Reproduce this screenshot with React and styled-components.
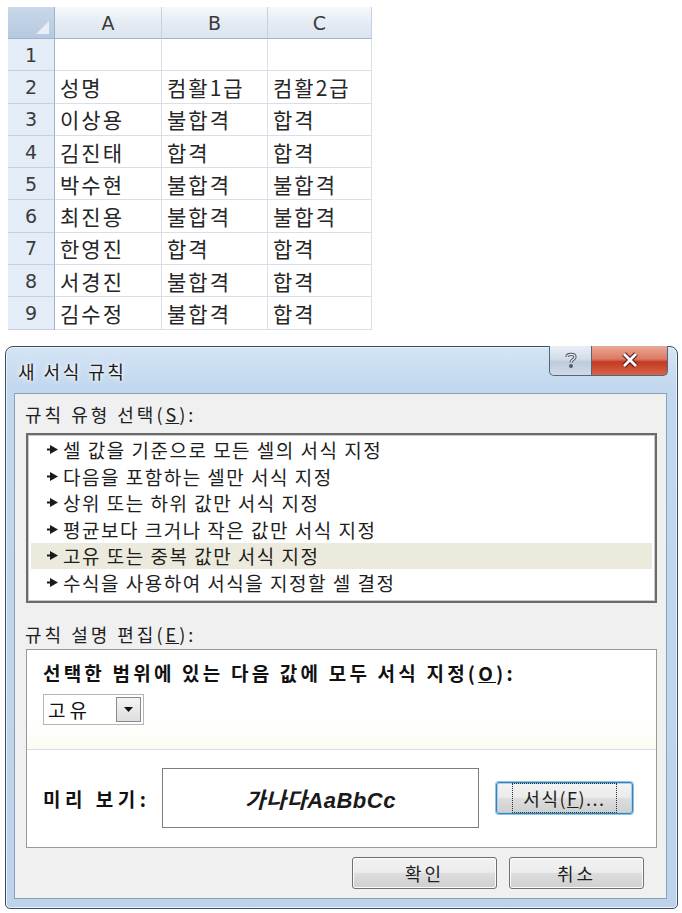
import React from 'react'
import styled, { createGlobalStyle } from 'styled-components'

const GlobalStyle = createGlobalStyle`
  html, body {
    margin: 0;
    background: #ffffff;
  }
  body {
    font-family: "Noto Sans CJK KR", "Liberation Sans", sans-serif;
    color: #222;
  }
`

const rows = [
  ['', '', ''],
  ['성명', '컴활1급', '컴활2급'],
  ['이상용', '불합격', '합격'],
  ['김진태', '합격', '합격'],
  ['박수현', '불합격', '불합격'],
  ['최진용', '불합격', '불합격'],
  ['한영진', '합격', '합격'],
  ['서경진', '불합격', '합격'],
  ['김수정', '불합격', '합격'],
]

const rules = [
  '셀 값을 기준으로 모든 셀의 서식 지정',
  '다음을 포함하는 셀만 서식 지정',
  '상위 또는 하위 값만 서식 지정',
  '평균보다 크거나 작은 값만 서식 지정',
  '고유 또는 중복 값만 서식 지정',
  '수식을 사용하여 서식을 지정할 셀 결정',
]

const Page = styled.div`
  padding: 7px 0 0 0;
`

/* ---------- spreadsheet ---------- */

const Sheet = styled.div`
  margin-left: 8px;
  display: grid;
  grid-template-columns: 47px 107px 106px 104px;
  grid-template-rows: 32px repeat(9, 32.3px);
  width: 364px;
`

const Corner = styled.div`
  position: relative;
  background: linear-gradient(180deg, #c9d8ea 0%, #b6c9e0 100%);
  border-right: 1px solid #9fb3cc;
  border-bottom: 1px solid #9fb3cc;
`

const CornerMark = styled.span`
  position: absolute;
  right: 5px;
  bottom: 4px;
  width: 0;
  height: 0;
  border-left: 13px solid transparent;
  border-bottom: 13px solid #e9eef5;
`

const HeadCell = styled.div`
  display: flex;
  align-items: center;
  justify-content: center;
  background: linear-gradient(180deg, #f6f8fb 0%, #e4ebf4 55%, #dbe4ef 100%);
  border-right: 1px solid #c5d1e0;
  border-bottom: 1px solid #9fb3cc;
  font-family: "DejaVu Sans", "Liberation Sans", sans-serif;
  font-size: 19px;
  color: #3b3b3b;
`

const RowHead = styled.div`
  display: flex;
  align-items: center;
  justify-content: center;
  background: #e4ecf7;
  border-right: 1px solid #9fb3cc;
  border-bottom: 1px solid #c5d1e0;
  font-family: "DejaVu Sans", "Liberation Sans", sans-serif;
  font-size: 19px;
  color: #3b3b3b;
`

const Cell = styled.div`
  display: flex;
  align-items: center;
  padding-left: 5px;
  background: #ffffff;
  border-right: 1px solid #d9dfe8;
  border-bottom: 1px solid #d9dfe8;
  font-size: 21px;
  letter-spacing: 2px;
  color: #262626;
  white-space: nowrap;
`

/* ---------- dialog ---------- */

const Window = styled.div`
  margin: 16px 0 0 5px;
  width: 673px;
  height: 563px;
  box-sizing: border-box;
  border: 1px solid #3e4d60;
  border-radius: 8px 8px 5px 5px;
  background: linear-gradient(180deg, #d4e4f4 0%, #c2d8ee 40px, #bcd3eb 100%);
  box-shadow: inset 0 0 0 1px #e8f1fb;
  display: flex;
  flex-direction: column;
`

const TitleBar = styled.div`
  height: 46px;
  display: flex;
  justify-content: space-between;
  align-items: flex-start;
  padding: 0 9px 0 12px;
`

const Title = styled.div`
  margin-top: 11px;
  font-size: 18px;
  letter-spacing: 2.5px;
  color: #1b1b1b;
  text-shadow: 0 0 6px #ffffff, 0 0 3px #ffffff;
`

const CaptionButtons = styled.div`
  display: flex;
  margin-top: -1px;
`

const CaptionBtn = styled.div`
  height: 30px;
  box-sizing: border-box;
  display: flex;
  align-items: center;
  justify-content: center;
  border: 1px solid #55667b;
  border-top: none;
  ${({ $close }) => $close ? `
    width: 76px;
    border-left: none;
    border-radius: 0 0 5px 0;
    background: linear-gradient(180deg, #e9a998 0%, #db7a63 45%, #c33a1f 55%, #d5644a 100%);
  ` : `
    width: 43px;
    border-radius: 0 0 0 5px;
    background: linear-gradient(180deg, #e8eef5 0%, #d3dde9 45%, #bfcbdb 55%, #cfdbe8 100%);
  `}
`

const Client = styled.div`
  flex: 1;
  margin: 0 10px 9px 8px;
  border: 1px solid #8a9fb8;
  background: #f0f0f0;
  display: flex;
  flex-direction: column;
  padding: 0 9px 0 11px;
`

const FieldLabel = styled.div`
  font-size: 18px;
  letter-spacing: 3px;
  line-height: 20px;
  color: #202020;
  margin-top: ${({ $top }) => $top}px;
  margin-left: -1px;
`

const ListBox = styled.div`
  margin-top: 9px;
  height: 170px;
  box-sizing: border-box;
  border: 2px solid #6b6b6b;
  box-shadow: inset 0 0 0 1px #c9c9c9;
  background: #ffffff;
  padding: 2px 3px;
  display: flex;
  flex-direction: column;
`

const RuleItem = styled.div`
  height: 26.5px;
  display: flex;
  align-items: center;
  gap: 5px;
  padding-left: 16px;
  font-size: 19px;
  letter-spacing: 1.5px;
  color: #1e1e1e;
  white-space: nowrap;
  background: ${({ $selected }) => ($selected ? '#ebeadc' : 'transparent')};
`

const DescBox = styled.div`
  margin-top: 5px;
  height: 199px;
  box-sizing: border-box;
  border: 1px solid #9a9a9a;
  background: #ffffff;
  display: flex;
  flex-direction: column;
`

const DescTop = styled.div`
  height: 100px;
  box-sizing: border-box;
  padding: 12px 0 0 16px;
  border-bottom: 1px solid #cfdded;
  background: linear-gradient(180deg, #ffffff 0%, #ffffff 70%, #fcfcf4 100%);
`

const BoldLine = styled.div`
  font-size: 19px;
  letter-spacing: 3.2px;
  font-weight: 700;
  color: #111;
  line-height: 22px;
  white-space: nowrap;
`

const Dropdown = styled.div`
  margin-top: 10px;
  width: 101px;
  height: 31px;
  box-sizing: border-box;
  border: 1px solid #b5b5b5;
  display: flex;
  align-items: center;
  justify-content: space-between;
  padding: 0 2px 0 4px;
  font-size: 19px;
  letter-spacing: 4px;
  color: #111;
`

const DropArrow = styled.div`
  width: 25px;
  height: 25px;
  box-sizing: border-box;
  border: 1px solid #8a8a8a;
  background: linear-gradient(180deg, #f4f4f4 0%, #dedede 100%);
  display: flex;
  align-items: center;
  justify-content: center;
`

const DescBottom = styled.div`
  flex: 1;
  display: flex;
  align-items: center;
  padding: 0 22px 0 16px;
`

const PreviewLabel = styled.div`
  width: 119px;
  font-size: 19px;
  letter-spacing: 4.5px;
  font-weight: 700;
  color: #111;
  white-space: nowrap;
`

const Preview = styled.div`
  width: 317px;
  height: 60px;
  box-sizing: border-box;
  border: 1px solid #7c7c7c;
  display: flex;
  align-items: center;
  justify-content: center;
  font-family: "Liberation Sans", "Noto Sans CJK KR", sans-serif;
  font-size: 22px;
  letter-spacing: 0.5px;
  font-style: italic;
  font-weight: 700;
  color: #1a1a1a;
`

const PushButton = styled.div`
  width: ${({ $w }) => $w}px;
  height: 32px;
  box-sizing: border-box;
  border: 1px solid ${({ $focus }) => ($focus ? '#3c7fb1' : '#707070')};
  border-radius: 3px;
  background: linear-gradient(180deg, #f3f3f3 0%, #ebebeb 48%, #dddddd 52%, #cfcfcf 100%);
  box-shadow: ${({ $focus }) =>
    $focus ? '0 0 0 1px #8fc3e6, inset 0 0 0 1px #9fd3f0' : 'inset 0 0 0 1px #fbfbfb'};
  display: flex;
  align-items: center;
  justify-content: center;
  font-size: 18px;
  letter-spacing: 3px;
  color: #1e1e1e;
  margin-left: ${({ $ml }) => $ml || 0}px;
`

const FocusRing = styled.span`
  padding: 1px 10px;
  border: 1px dotted #333;
  letter-spacing: 1.5px;
`

const Footer = styled.div`
  display: flex;
  justify-content: flex-end;
  margin-top: 9px;
  padding-right: 13px;
`

const RuleArrow = () => (
  <svg width="11" height="9" viewBox="0 0 11 9">
    <rect x="0" y="3.5" width="4" height="2" fill="#1a1a1a" />
    <polygon points="3,0 11,4.5 3,9" fill="#1a1a1a" />
  </svg>
)

export default function App() {
  return (
    <Page>
      <GlobalStyle />
      <Sheet>
        <Corner>
          <CornerMark />
        </Corner>
        <HeadCell>A</HeadCell>
        <HeadCell>B</HeadCell>
        <HeadCell>C</HeadCell>
        {rows.map((r, i) => (
          <React.Fragment key={i}>
            <RowHead>{i + 1}</RowHead>
            {r.map((v, j) => (
              <Cell key={j}>{v}</Cell>
            ))}
          </React.Fragment>
        ))}
      </Sheet>

      <Window>
        <TitleBar>
          <Title>새 서식 규칙</Title>
          <CaptionButtons>
            <CaptionBtn>
              <svg width="14" height="18" viewBox="0 0 14 18">
                <path
                  d="M3 6 C3 2.5 11 2.5 11 6 C11 8.5 7 8.5 7 11.5"
                  fill="none"
                  stroke="#4a5568"
                  strokeWidth="3.2"
                />
                <path
                  d="M3 6 C3 2.5 11 2.5 11 6 C11 8.5 7 8.5 7 11.5"
                  fill="none"
                  stroke="#eef2f7"
                  strokeWidth="1.2"
                />
                <circle cx="7" cy="15" r="1.9" fill="#4a5568" />
              </svg>
            </CaptionBtn>
            <CaptionBtn $close>
              <svg width="18" height="16" viewBox="0 0 18 16">
                <path d="M3 2 L15 14 M15 2 L3 14" stroke="#5a1a10" strokeWidth="5" />
                <path d="M3 2 L15 14 M15 2 L3 14" stroke="#ffffff" strokeWidth="2.8" />
              </svg>
            </CaptionBtn>
          </CaptionButtons>
        </TitleBar>

        <Client>
          <FieldLabel $top={10}>
            규칙 유형 선택(<u>S</u>):
          </FieldLabel>
          <ListBox>
            {rules.map((r, i) => (
              <RuleItem key={r} $selected={i === 4}>
                <RuleArrow />
                {r}
              </RuleItem>
            ))}
          </ListBox>

          <FieldLabel $top={21}>
            규칙 설명 편집(<u>E</u>):
          </FieldLabel>
          <DescBox>
            <DescTop>
              <BoldLine>
                선택한 범위에 있는 다음 값에 모두 서식 지정(<u>O</u>):
              </BoldLine>
              <Dropdown>
                고유
                <DropArrow>
                  <svg width="9" height="5" viewBox="0 0 9 5">
                    <polygon points="0,0 9,0 4.5,5" fill="#111" />
                  </svg>
                </DropArrow>
              </Dropdown>
            </DescTop>
            <DescBottom>
              <PreviewLabel>미리 보기:</PreviewLabel>
              <Preview>가나다AaBbCc</Preview>
              <PushButton $w={137} $ml={17} $focus>
                <FocusRing>
                  서식(<u>F</u>)...
                </FocusRing>
              </PushButton>
            </DescBottom>
          </DescBox>

          <Footer>
            <PushButton $w={145}>확인</PushButton>
            <PushButton $w={135} $ml={12}>
              취소
            </PushButton>
          </Footer>
        </Client>
      </Window>
    </Page>
  )
}
